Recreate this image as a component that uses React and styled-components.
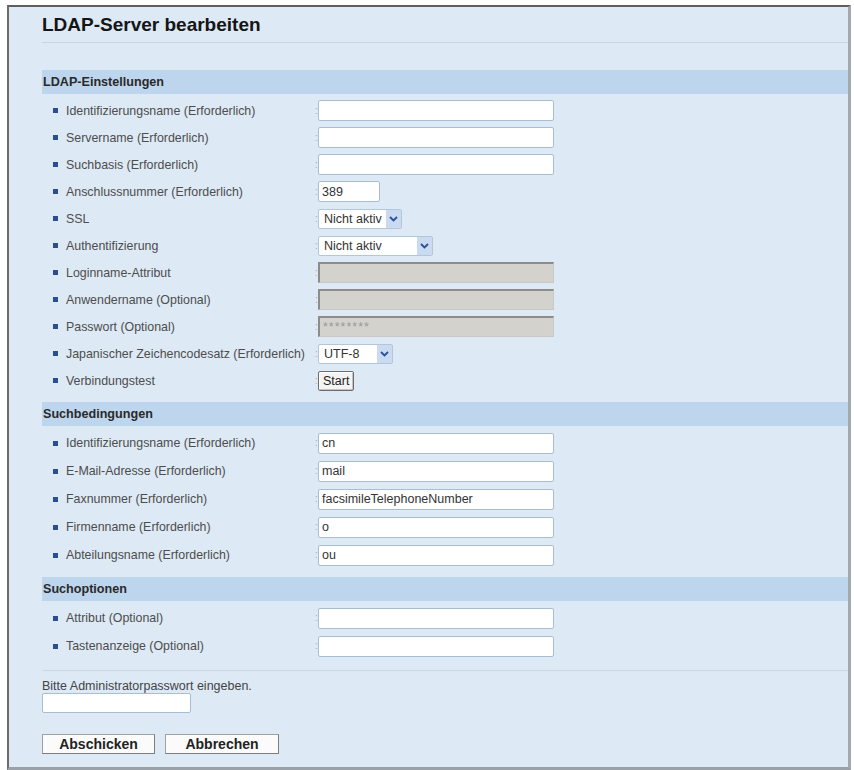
import React from 'react';
import styled, { createGlobalStyle } from 'styled-components';

const GlobalStyle = createGlobalStyle`
  html, body {
    margin: 0;
    padding: 0;
    background: #ffffff;
  }
  body {
    font-family: "Liberation Sans", Arial, sans-serif;
  }
`;

const Frame = styled.div`
  margin: 5px 3px 0 7px;
  border-top: 2px solid #5f5f5f;
  border-left: 2px solid #6c6c6c;
  border-right: 3px solid #a4a9b0;
  border-bottom: 3px solid #9ba1a9;
  background: #dde9f5;
  padding: 0 0 13px 33px;
`;

const Title = styled.h1`
  margin: 0;
  height: 36px;
  box-sizing: border-box;
  display: flex;
  align-items: center;
  border-bottom: 1px solid #c8d5e3;
  font-size: 19px;
  font-weight: bold;
  color: #151515;
`;

const SectionBand = styled.div`
  margin-top: ${p => p.$top}px;
  height: 24px;
  display: flex;
  align-items: center;
  padding-left: 1px;
  background: #bdd5ed;
  font-size: 12.6px;
  font-weight: bold;
  color: #2a2a2a;
`;

const Rows = styled.div`
  margin-top: 3px;
`;

const Row = styled.div`
  height: ${p => p.$h}px;
  display: flex;
  align-items: center;
  padding-left: 11px;
`;

const Bullet = styled.span`
  width: 5px;
  height: 5px;
  margin-right: 8px;
  background: #2b4f8c;
  flex: none;
`;

const Label = styled.span`
  width: 249px;
  font-size: 12.4px;
  color: #4d4d4d;
  white-space: nowrap;
`;

const Colon = styled.span`
  width: 3px;
  font-size: 10px;
  color: #a3adb8;
  line-height: 1;
`;

const TextInput = styled.input`
  box-sizing: border-box;
  width: ${p => p.$w || 236}px;
  height: 21px;
  margin: 0;
  padding: 0 3px;
  border: 1px solid #a9bdd3;
  border-radius: 2px;
  background: #ffffff;
  font-family: "Liberation Sans", Arial, sans-serif;
  font-size: 12.5px;
  color: #333333;
  outline: none;

  &:disabled {
    background: #d3d2cd;
    border-top: 2px solid #8c8c8c;
    border-left: 2px solid #8c8c8c;
    border-right: 1px solid #c8c8c8;
    border-bottom: 1px solid #c8c8c8;
    border-radius: 0;
    color: #9a9a9a;
    letter-spacing: 1px;
  }
`;

const SelectBox = styled.div`
  box-sizing: border-box;
  width: ${p => p.$w}px;
  height: 20px;
  display: flex;
  align-items: stretch;
  border: 1px solid #b4c6da;
  border-radius: 2px;
  background: #ffffff;
  font-size: 12.5px;
  color: #333333;
`;

const SelectValue = styled.span`
  flex: 1;
  display: flex;
  align-items: center;
  padding-left: 5px;
  white-space: nowrap;
  overflow: hidden;
`;

const SelectArrow = styled.span`
  width: 15px;
  display: flex;
  align-items: center;
  justify-content: center;
  background: #c9daf1;
`;

const SmallButton = styled.button`
  box-sizing: border-box;
  height: 20px;
  padding: 0 4px;
  margin: 0;
  border: 1px solid #6d6d6d;
  border-radius: 2px;
  background: #f4f4f4;
  box-shadow: inset 1px 1px 0 #ffffff, inset -1px -1px 0 #c4c4c4;
  font-family: "Liberation Sans", Arial, sans-serif;
  font-size: 12.5px;
  color: #222222;
`;

const Separator = styled.div`
  margin-top: 10px;
  border-top: 1px solid #c9d6e4;
`;

const Hint = styled.div`
  margin-top: 8px;
  font-size: 12.5px;
  line-height: 14px;
  color: #444444;
`;

const AdminInput = styled(TextInput)`
  display: block;
  margin-top: 0;
  height: 20px;
`;

const ButtonRow = styled.div`
  margin-top: 21px;
  display: flex;
  gap: 10px;
`;

const FormButton = styled.button`
  box-sizing: border-box;
  width: ${p => p.$w}px;
  height: 20px;
  margin: 0;
  padding: 0;
  border: 1px solid #a0a0a0;
  border-bottom-color: #7d7d7d;
  border-right-color: #7d7d7d;
  background: #fbfbfb;
  font-family: "Liberation Sans", Arial, sans-serif;
  font-size: 14px;
  font-weight: bold;
  color: #222222;
`;

const Chevron = () => (
  <svg width="9" height="6" viewBox="0 0 9 6">
    <path d="M1 1 L4.5 4.5 L8 1" fill="none" stroke="#2d4f96" strokeWidth="1.8" />
  </svg>
);

const Select = ({ value, w }) => (
  <SelectBox $w={w}>
    <SelectValue>{value}</SelectValue>
    <SelectArrow><Chevron /></SelectArrow>
  </SelectBox>
);

const ldapRows = [
  { label: 'Identifizierungsname (Erforderlich)', type: 'text' },
  { label: 'Servername (Erforderlich)', type: 'text' },
  { label: 'Suchbasis (Erforderlich)', type: 'text' },
  { label: 'Anschlussnummer (Erforderlich)', type: 'text', value: '389', w: 62 },
  { label: 'SSL', type: 'select', value: 'Nicht aktiv', w: 84 },
  { label: 'Authentifizierung', type: 'select', value: 'Nicht aktiv', w: 115 },
  { label: 'Loginname-Attribut', type: 'disabled' },
  { label: 'Anwendername (Optional)', type: 'disabled' },
  { label: 'Passwort (Optional)', type: 'disabled', value: '********' },
  { label: 'Japanischer Zeichencodesatz (Erforderlich)', type: 'select', value: 'UTF-8', w: 75 },
  { label: 'Verbindungstest', type: 'button', value: 'Start' },
];

const searchRows = [
  { label: 'Identifizierungsname (Erforderlich)', type: 'text', value: 'cn' },
  { label: 'E-Mail-Adresse (Erforderlich)', type: 'text', value: 'mail' },
  { label: 'Faxnummer (Erforderlich)', type: 'text', value: 'facsimileTelephoneNumber' },
  { label: 'Firmenname (Erforderlich)', type: 'text', value: 'o' },
  { label: 'Abteilungsname (Erforderlich)', type: 'text', value: 'ou' },
];

const optionRows = [
  { label: 'Attribut (Optional)', type: 'text' },
  { label: 'Tastenanzeige (Optional)', type: 'text' },
];

const renderControl = item => {
  switch (item.type) {
    case 'select':
      return <Select value={item.value} w={item.w} />;
    case 'disabled':
      return <TextInput disabled defaultValue={item.value || ''} />;
    case 'button':
      return <SmallButton>{item.value}</SmallButton>;
    default:
      return <TextInput $w={item.w} defaultValue={item.value || ''} />;
  }
};

const Section = ({ title, top, rows, rowH }) => (
  <>
    <SectionBand $top={top}>{title}</SectionBand>
    <Rows>
      {rows.map((item, i) => (
        <Row key={i} $h={rowH}>
          <Bullet />
          <Label>{item.label}</Label>
          <Colon>:</Colon>
          {renderControl(item)}
        </Row>
      ))}
    </Rows>
  </>
);

export default function App() {
  return (
    <>
      <GlobalStyle />
      <Frame>
        <Title>LDAP-Server bearbeiten</Title>
        <Section title="LDAP-Einstellungen" top={27} rows={ldapRows} rowH={27} />
        <Section title="Suchbedingungen" top={8} rows={searchRows} rowH={28} />
        <Section title="Suchoptionen" top={8} rows={optionRows} rowH={28} />
        <Separator />
        <Hint>Bitte Administratorpasswort eingeben.</Hint>
        <AdminInput $w={149} type="text" />
        <ButtonRow>
          <FormButton $w={113}>Abschicken</FormButton>
          <FormButton $w={114}>Abbrechen</FormButton>
        </ButtonRow>
      </Frame>
    </>
  );
}
